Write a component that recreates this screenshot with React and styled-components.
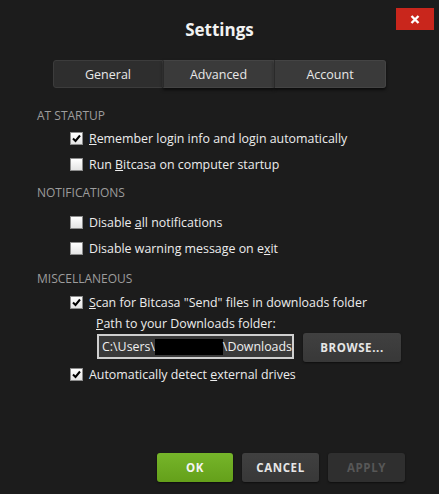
import React from "react";
import styled, { createGlobalStyle } from "styled-components";

const Global = createGlobalStyle`
  html, body { margin: 0; padding: 0; background: #1c1c1c; }
  body { font-family: "Open Sans", "Noto Sans", sans-serif; color: #e6e6e6; }
  #root { width: 439px; height: 494px; }
`;

const Window = styled.div`
  width: 439px;
  height: 494px;
  background: #1c1c1c;
  display: flex;
  flex-direction: column;
  box-sizing: border-box;
`;

const Header = styled.div`
  display: grid;
  grid-template-columns: 1fr auto 1fr;
  padding-top: 8px;
`;

const Title = styled.h1`
  grid-column: 2;
  margin: 12px 0 0;
  font-size: 17px;
  line-height: 20px;
  font-weight: 700;
  color: #f2f2f2;
`;

const CloseButton = styled.button`
  grid-column: 3;
  justify-self: end;
  align-self: start;
  margin-right: 5px;
  width: 38px;
  height: 22px;
  border: none;
  background: #c9261c;
  padding: 0;
  display: flex;
  align-items: center;
  justify-content: center;
`;

const Tabs = styled.div`
  display: grid;
  grid-template-columns: 110px 111px 112px;
  margin: 20px 0 0 53px;
  width: 333px;
  height: 28px;
`;

const Tab = styled.div`
  display: flex;
  align-items: center;
  justify-content: center;
  font-size: 12.5px;
  color: #e8e8e8;
  background: ${(p) => (p.$active ? "#2e2e2e" : "#3a3a3a")};
  border: 1px solid ${(p) => (p.$active ? "#3c3c3c" : "#444")};
  border-left-color: ${(p) => (p.$first ? "#3c3c3c" : "#2a2a2a")};
  box-shadow: ${(p) => (p.$active ? "none" : "0 2px 3px rgba(0,0,0,0.6)")};
  border-radius: ${(p) => (p.$first ? "3px 0 0 3px" : p.$last ? "0 3px 3px 0" : "0")};
  box-sizing: border-box;
`;

const Content = styled.div`
  padding-left: 37px;
  display: flex;
  flex-direction: column;
`;

const SectionTitle = styled.div`
  font-size: 12px;
  line-height: 16px;
  color: #9d9d9d;
  margin-top: ${(p) => p.$top}px;
`;

const Row = styled.label`
  display: flex;
  align-items: center;
  gap: 6px;
  padding-left: 33px;
  height: 16px;
  margin-top: ${(p) => p.$top}px;
  font-size: 12.4px;
  color: #ececec;
`;

const Box = styled.span`
  width: 13px;
  height: 13px;
  box-sizing: border-box;
  border: 1px solid #8c8c8c;
  background: linear-gradient(#ffffff, #e4e4e4);
  display: flex;
  align-items: center;
  justify-content: center;
  flex: none;
`;

const PathLabel = styled.div`
  padding-left: 59px;
  margin-top: 6px;
  font-size: 12.4px;
  line-height: 16px;
  color: #ececec;
`;

const PathRow = styled.div`
  display: flex;
  align-items: flex-start;
  gap: 9px;
  padding-left: 60px;
  margin-top: 1px;
`;

const PathInput = styled.div`
  width: 197px;
  height: 25px;
  margin-top: 1px;
  box-sizing: border-box;
  border: 2px solid #cfcfcf;
  background: #3a3a3a;
  display: flex;
  align-items: center;
  padding-left: 3px;
  font-size: 12.4px;
  color: #f0f0f0;
  white-space: nowrap;
  overflow: hidden;
`;

const Redacted = styled.span`
  display: inline-block;
  width: 69px;
  height: 16px;
  background: #000;
`;

const Button = styled.button`
  width: ${(p) => p.$w || 77}px;
  height: 29px;
  border: none;
  border-radius: 3px;
  font-family: "Open Sans", "Noto Sans", sans-serif;
  font-weight: 700;
  font-size: 11.5px;
  letter-spacing: 0.6px;
  padding: 0;
  color: ${(p) => (p.$variant === "ok" ? "#f4f4f4" : p.$variant === "disabled" ? "#575757" : "#e6e6e6")};
  background: ${(p) =>
    p.$variant === "ok"
      ? "linear-gradient(#76b52a, #64a01a)"
      : p.$variant === "disabled"
      ? "#2f2f2f"
      : "linear-gradient(#404040, #383838)"};
  box-shadow: 0 1px 2px rgba(0, 0, 0, 0.5);
`;

const Footer = styled.div`
  margin-top: auto;
  margin-bottom: 12px;
  display: flex;
  justify-content: flex-end;
  gap: 9px;
  padding-right: 34px;
`;

const Check = () => (
  <svg width="9" height="9" viewBox="0 0 9 9">
    <path d="M1 4.5 L3.5 7 L8 1.5" stroke="#000" strokeWidth="2" fill="none" />
  </svg>
);

const Checkbox = ({ checked, top, children }) => (
  <Row $top={top}>
    <Box>{checked && <Check />}</Box>
    <span>{children}</span>
  </Row>
);

export default function App() {
  return (
    <Window>
      <Global />
      <Header>
        <Title>Settings</Title>
        <CloseButton aria-label="Close">
          <svg width="10" height="9" viewBox="0 0 10 9">
            <path d="M1.5 1 L8.5 8 M8.5 1 L1.5 8" stroke="#fff" strokeWidth="2.4" />
          </svg>
        </CloseButton>
      </Header>
      <Tabs>
        <Tab $active $first>General</Tab>
        <Tab>Advanced</Tab>
        <Tab $last>Account</Tab>
      </Tabs>
      <Content>
        <SectionTitle $top={20}>AT STARTUP</SectionTitle>
        <Checkbox checked top={6}>
          <u>R</u>emember login info and login automatically
        </Checkbox>
        <Checkbox top={10}>
          Run <u>B</u>itcasa on computer startup
        </Checkbox>
        <SectionTitle $top={13}>NOTIFICATIONS</SectionTitle>
        <Checkbox top={13}>
          Disable <u>a</u>ll notifications
        </Checkbox>
        <Checkbox top={10}>
          Disable warning message on e<u>x</u>it
        </Checkbox>
        <SectionTitle $top={15}>MISCELLANEOUS</SectionTitle>
        <Checkbox checked top={7}>
          <u>S</u>can for Bitcasa "Send" files in downloads folder
        </Checkbox>
        <PathLabel>
          <u>P</u>ath to your Downloads folder:
        </PathLabel>
        <PathRow>
          <PathInput>
            C:\Users\<Redacted />\Downloads
          </PathInput>
          <Button $w={98}>BROWSE...</Button>
        </PathRow>
        <Checkbox checked top={4}>
          Automatically detect <u>e</u>xternal drives
        </Checkbox>
      </Content>
      <Footer>
        <Button $variant="ok" $w={76}>OK</Button>
        <Button $w={77}>CANCEL</Button>
        <Button $variant="disabled" $w={77}>APPLY</Button>
      </Footer>
    </Window>
  );
}
